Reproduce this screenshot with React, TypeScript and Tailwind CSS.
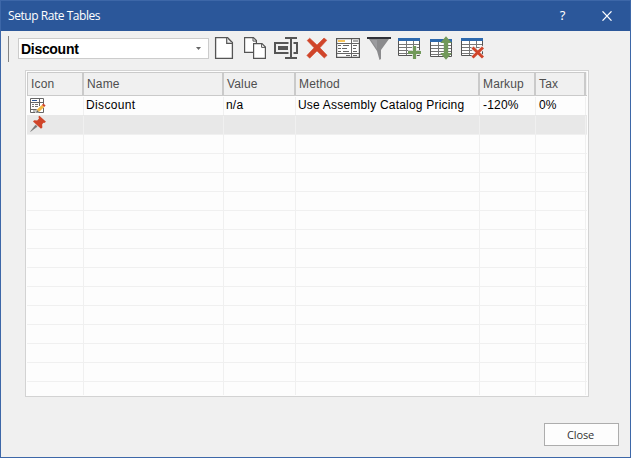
import React from 'react';

const columns = [
  { title: 'Icon', cell: 'w-[57px]' },
  { title: 'Name', cell: 'w-[140px]' },
  { title: 'Value', cell: 'w-[72px]' },
  { title: 'Method', cell: 'w-[184px]' },
  { title: 'Markup', cell: 'w-[56px]' },
  { title: 'Tax', cell: 'w-[50px]' },
];

const discountRow = ['', 'Discount', 'n/a', 'Use Assembly Catalog Pricing', '-120%', '0%'];

function Icon({ children }: { children: React.ReactNode }) {
  return (
    <svg className="h-6 w-6 shrink-0" viewBox="0 0 24 24" fill="none">
      {children}
    </svg>
  );
}

function TableGlyph() {
  return (
    <>
      <path d="M.5 5v14.5h21V5" fill="#fff" stroke="#555" />
      <path d="M1 8.5h20M1 11.5h20M1 14.5h20M1 17.5h20M8.5 5v14M15.5 5v14" stroke="#777" />
      <path d="M0 2h22v3H0z" fill="#2e69ad" />
    </>
  );
}

function Toolbar() {
  return (
    <div className="ml-[3px] flex gap-[7px]">
      <Icon>
        <path d="M3.6 1.6h12l4.8 4.8v16H3.6z" fill="#fff" stroke="#555" strokeWidth="1.3" />
        <path d="M14.7 2v5.3H20" fill="#eee" stroke="#555" strokeWidth="1.2" />
        <path d="M15.5 2.5l4 4" stroke="#888" />
      </Icon>
      <Icon>
        <path d="M1.6 1.6h8.8l3 3v11.8H1.6z" fill="#fff" stroke="#555" strokeWidth="1.2" />
        <path d="M10 1.6v3.5h3.4" stroke="#555" />
        <path d="M10.6 7.6h8.4l3.4 3.4v11.4H10.6z" fill="#fff" stroke="#555" strokeWidth="1.2" />
        <path d="M18.6 7.6v3.8h3.8" stroke="#555" />
      </Icon>
      <Icon>
        <path d="M1 7h22v10H1z" fill="#f0f0f0" stroke="#555" strokeWidth="2" />
        <path d="M14.5 5h5v14h-5z" fill="#f0f0f0" />
        <path d="M4 10h10v4H4z" fill="#555" />
        <path d="M11 2h12M11 22h12M17 2v20" stroke="#555" strokeWidth="2" />
      </Icon>
      <Icon>
        <path
          d="M2.2 4.5 4.7 2.2 12 9l7-7 2.8 2.3-6.9 7.5 7.2 7.5-2.8 2.7L12 14.9l-7.3 7.3-2.8-2.8 7.2-7.6z"
          fill="#d0452a"
          stroke="#d0452a"
          strokeWidth=".6"
          strokeLinejoin="round"
        />
      </Icon>
      <Icon>
        <path d="M.6 2.6h22.8v18.8H.6z" fill="#fff" stroke="#555" strokeWidth="1.2" />
        <path d="M1 7.5h22M1 17.5h22M15.5 3v18" stroke="#666" />
        <path d="M2 4h7v2H2z" fill="#f6c45c" />
        <path d="M17 5h5" stroke="#555" />
        <path
          d="M2 9.5h3M7 9.5h6M2 12.5h3M6 12.5h5M2 15.5h3M7 15.5h6M17 9.5h4M17 12.5h3M17 15.5h4M10 19.5h4M17 19.5h4"
          stroke="#666"
        />
      </Icon>
      <Icon>
        <path d="M2 3h20l-8 11v9l-1.5 1L10 15z" fill="#8b8b8d" />
        <path d="M4 4h6v9z" fill="#9b9b9e" />
        <path d="M0 1h24v2H0z" fill="#303138" />
      </Icon>
      <Icon>
        <TableGlyph />
        <path d="M16.5 10v13M10 16.5h13" stroke="#f0f0f0" strokeWidth="4.6" />
        <path d="M16.5 10v13M10 16.5h13" stroke="#72995a" strokeWidth="3.2" />
      </Icon>
      <Icon>
        <g transform="translate(1 1)">
          <TableGlyph />
        </g>
        <path d="M17 .2 22.8 7h-3.6v10h3.6L17 23.8 11.2 17h3.6V7h-3.6z" fill="#72995a" />
      </Icon>
      <Icon>
        <g transform="translate(1)">
          <TableGlyph />
        </g>
        <path d="M12 11l11.5 11.5M23.5 11 12 22.5" stroke="#f0f0f0" strokeWidth="4.6" />
        <path d="M12.5 11.5l10.5 10M23 11.5l-10.5 10" stroke="#d0452a" strokeWidth="3" />
      </Icon>
    </div>
  );
}

function FormEditIcon() {
  return (
    <svg className="-mt-px ml-[3px] h-[17px] w-[16px]" viewBox="0 0 16 17" fill="none">
      <path d="M.5 1.5h13v14H.5z" fill="#fff" stroke="#666" />
      <path d="M1 5.5h12M9.5 2v7M1 12.5h6" stroke="#666" />
      <path d="M2 3.5h5" stroke="#2b579a" />
      <path d="M2 7.5h2M5 7.5h3M2 9.5h2M5 9.5h3M3 14h3" stroke="#777" />
      <path d="M5 16.4l1.2-3.5 6.4-6.2 2.6 2.4-6.5 6.2z" fill="#fff" />
      <path d="M6.8 12.8l5-4.9 2.4 2.2-5.2 4.9z" fill="#f5b945" />
      <path d="M11.8 7.9l1.6-1.4 2.2 2-1.4 1.6z" fill="#d0452a" />
      <path d="M6.8 12.8l2.2 2.2-2.9.9z" fill="#666" />
    </svg>
  );
}

function PinIcon() {
  return (
    <svg className="-mt-[3px] ml-[3px] h-[17px] w-[17px]" viewBox="0 0 17 17" fill="none">
      <path d="M.6 16.4l5-6.4 1.6 1.5z" fill="#777" stroke="#777" strokeWidth=".5" />
      <path d="M9.4.7l6.6 6-1.8 1.2-.8-.2-1.3 1.8.3 3.1-1.4 1.1L3 6.6l1.2-1.3 3 .3L9 3.4l-.6-1.6z" fill="#d0452a" />
    </svg>
  );
}

export default function App() {
  return (
    <div className="flex h-[458px] w-[631px] flex-col overflow-hidden border border-[#3d67a8] bg-[#f0f0f0] font-['Liberation_Sans',Arial,sans-serif]">
      <header className="flex h-[30px] shrink-0 items-center bg-[#2b579a] pl-[7px] text-white">
        <h1 className="grow font-['Open_Sans','Noto_Sans',sans-serif] text-[12px] tracking-[-0.45px]">
          Setup Rate Tables
        </h1>
        <span className="w-[45px] text-center font-['Noto_Sans',sans-serif] text-[13px]">?</span>
        <svg className="mr-[17px] ml-[16px] h-[10px] w-[12px]" viewBox="0 0 12 10" fill="none">
          <path d="M1.5.3l9 9.4M10.5.3l-9 9.4" stroke="#fff" strokeWidth="1.2" />
        </svg>
      </header>

      <div className="flex h-[39px] shrink-0 items-start pt-[5px] pl-[7px]">
        <div className="h-[26px] w-px bg-[#858585]" />
        <div className="mt-[2px] ml-[9px] flex h-[21px] w-[191px] items-center justify-between border border-[#ccc] bg-white pr-[7px] pl-[2px]">
          <span className="text-[14px] leading-none font-bold tracking-[-0.3px] text-black">Discount</span>
          <svg className="h-[3px] w-[5px]" viewBox="0 0 5 3">
            <path d="M0 0h5L2.5 3z" fill="#666" />
          </svg>
        </div>
        <Toolbar />
      </div>

      <main className="ml-[24px] flex h-[327px] w-[564px] shrink-0 flex-col border border-[#d3d3d3] bg-[#fdfdfd] p-px">
        <div className="flex h-[24px] shrink-0 border-b border-[#cacaca] bg-[#f0f0f0]">
          {columns.map((column) => (
            <div
              key={column.title}
              className={`${column.cell} flex shrink-0 items-center border-t border-r-2 border-[#cacaca] pl-[3px] text-[12px] tracking-[0.15px] text-[#4e4e4e] first:border-l`}
            >
              {column.title}
            </div>
          ))}
        </div>
        <div className="flex h-[299px] flex-col overflow-hidden">
          {Array.from({ length: 16 }, (_, row) => (
            <div
              key={row}
              className={`flex h-[19px] w-[560px] shrink-0 border-t ${row < 2 ? 'border-transparent' : 'border-[#f0f0f0]'} ${row === 1 ? 'bg-[#e8e8e8]' : ''}`}
            >
              {columns.map((column, index) => (
                <div
                  key={column.title}
                  className={`${column.cell} flex shrink-0 items-center border-r border-[#f0f0f0]`}
                >
                  {row === 0 && index === 0 && <FormEditIcon />}
                  {row === 1 && index === 0 && <PinIcon />}
                  {row === 0 && index > 0 && (
                    <span
                      className={`-mt-[2px] text-[12px] leading-4 whitespace-nowrap text-black ${index > 3 ? 'pl-[3px]' : 'pl-[2px]'} ${index === 1 ? 'tracking-[0.35px]' : 'tracking-[0.2px]'}`}
                    >
                      {discountRow[index]}
                    </span>
                  )}
                </div>
              ))}
            </div>
          ))}
        </div>
      </main>

      <footer className="flex justify-end pt-[26px] pr-[11px]">
        <button className="h-[23px] w-[75px] border border-[#adadad] bg-[#fdfdfd] pr-[2px] font-['Open_Sans','Noto_Sans',sans-serif] text-[11px] leading-none tracking-[-0.1px] text-[#333]">
          Close
        </button>
      </footer>
    </div>
  );
}
